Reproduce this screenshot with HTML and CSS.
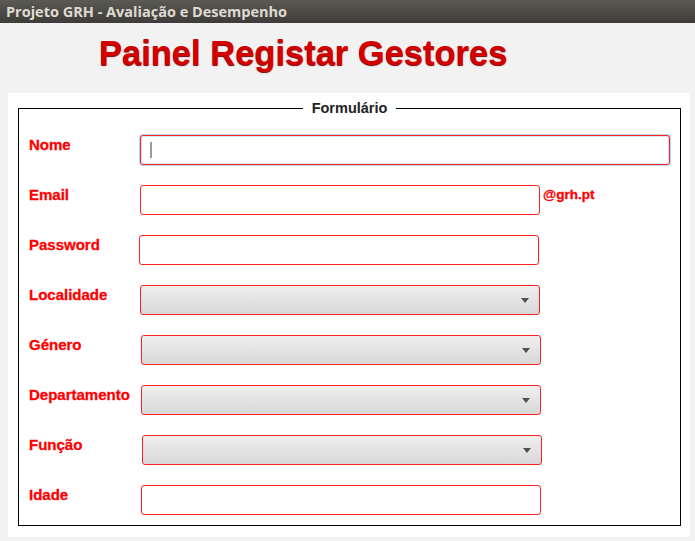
FILE: index.html
```html
<!DOCTYPE html>
<html lang="pt">
<head>
<meta charset="utf-8">
<title>Projeto GRH</title>
<link rel="stylesheet" href="styles.css">
</head>
<body>
<div class="titlebar">Projeto GRH - Avaliação e Desempenho</div>
<div class="header"><h1 class="heading">Painel Registar Gestores</h1></div>
<div class="panel">
  <fieldset class="form">
    <legend class="legend">Formulário</legend>
    <div class="grid">
      <label class="lbl">Nome</label>
      <div class="field"><span class="input input-wide input-focus"><span class="caret"></span></span></div>

      <label class="lbl">Email</label>
      <div class="field"><span class="input"></span><span class="suffix">@grh.pt</span></div>

      <label class="lbl">Password</label>
      <div class="field shift-l1"><span class="input"></span></div>

      <label class="lbl">Localidade</label>
      <div class="field"><span class="input select"></span></div>

      <label class="lbl">Género</label>
      <div class="field shift-r1"><span class="input select"></span></div>

      <label class="lbl">Departamento</label>
      <div class="field shift-r1"><span class="input select"></span></div>

      <label class="lbl">Função</label>
      <div class="field shift-r2"><span class="input select"></span></div>

      <label class="lbl">Idade</label>
      <div class="field shift-r1"><span class="input"></span></div>
    </div>
  </fieldset>
</div>
</body>
</html>
```

FILE: styles.css
```css
html, body {
  margin: 0;
  padding: 0;
}
body {
  background: #f2f2f2;
  font-family: "Liberation Sans", Arial, sans-serif;
}
.titlebar {
  height: 23px;
  box-sizing: border-box;
  padding: 3px 0 0 6px;
  background: linear-gradient(#5b5953, #3d3c38);
  color: #dfdbd2;
  font-family: "Open Sans", "DejaVu Sans", sans-serif;
  font-weight: 700;
  font-size: 14.5px;
  line-height: 17px;
  white-space: nowrap;
}
.header {
  height: 70px;
  box-sizing: border-box;
  padding: 12px 0 0 99px;
}
.heading {
  margin: 0;
  font-size: 34.5px;
  line-height: 37px;
  font-weight: 700;
  color: #d40000;
  text-shadow: 0 1px 1px #7a0000;
}
.panel {
  margin: 0 5px 0 8px;
  background: #fff;
  padding: 7px 9px 11px 10px;
}
.form {
  margin: 0;
  border: 1px solid #000;
  padding: 19px 10px 10px 10px;
}
.legend {
  margin: 0 auto;
  padding: 0 9px;
  font-size: 14.5px;
  font-weight: 700;
  color: #222;
  line-height: 16px;
}
.grid {
  display: grid;
  grid-template-columns: 111px 1fr;
  row-gap: 20px;
}
.lbl {
  color: #ff0000;
  font-weight: 700;
  font-size: 15px;
  line-height: 16px;
  padding-top: 2px;
  white-space: nowrap;
  -webkit-text-stroke: 0.3px #ff0000;
}
.field {
  display: flex;
  align-items: flex-start;
  height: 30px;
}
.shift-l1 { margin-left: -1px; }
.shift-r1 { margin-left: 1px; }
.shift-r2 { margin-left: 2px; }
.input {
  position: relative;
  display: block;
  box-sizing: border-box;
  width: 400px;
  height: 30px;
  border: 1px solid #ff2020;
  border-radius: 3px;
  background: #fff;
}
.input-wide {
  width: 530px;
}
.input-focus {
  box-shadow: 0 0 0 1px #bcd8ec, inset 0 0 1px 1px #d6e8f4;
}
.caret {
  position: absolute;
  left: 9px;
  top: 6px;
  width: 2px;
  height: 16px;
  background: #9a9a9a;
}
.select {
  background: linear-gradient(#efefef, #d8d8d8);
}
.select::after {
  content: "";
  position: absolute;
  right: 10px;
  top: 12px;
  border-left: 4px solid transparent;
  border-right: 4px solid transparent;
  border-top: 5px solid #505050;
}
.suffix {
  margin-left: 3px;
  margin-top: 2px;
  color: #ff0000;
  font-weight: 700;
  font-size: 13.5px;
  line-height: 16px;
  -webkit-text-stroke: 0.3px #ff0000;
}
```
